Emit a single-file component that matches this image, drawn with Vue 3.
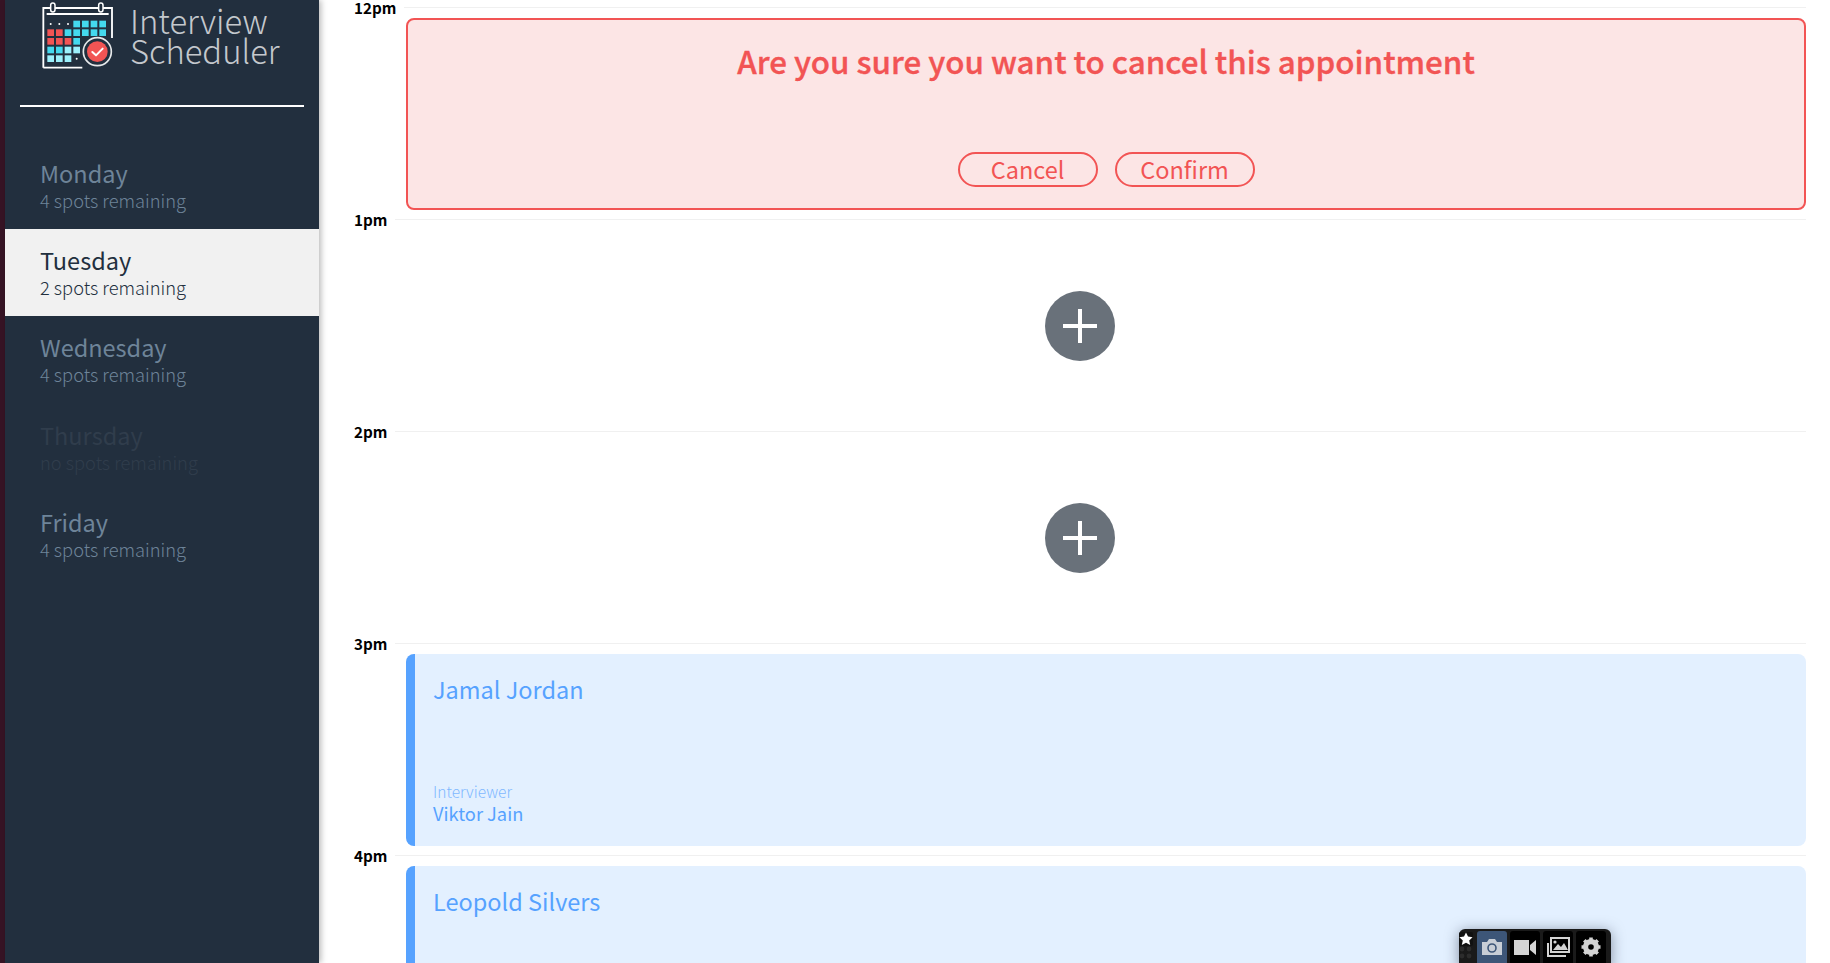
<script setup>
const days = [
  { name: 'Monday', spots: '4 spots remaining' },
  { name: 'Tuesday', spots: '2 spots remaining', selected: true },
  { name: 'Wednesday', spots: '4 spots remaining' },
  { name: 'Thursday', spots: 'no spots remaining', full: true },
  { name: 'Friday', spots: '4 spots remaining' }
]
const cyan = '#44d9ee', red = '#f25454', light = '#9cf0fb'
const cells = [
  [130, 62, cyan], [156, 62, cyan], [182, 62, cyan], [208, 62, cyan],
  [52, 88, red], [78, 88, red], [104, 88, cyan], [130, 88, cyan], [156, 88, cyan], [182, 88, cyan], [208, 88, cyan],
  [52, 114, red], [78, 114, red], [104, 114, red], [130, 114, cyan],
  [52, 140, cyan], [78, 140, cyan], [104, 140, light], [130, 140, light],
  [52, 166, light], [78, 166, light], [104, 166, light]
]
const dots = [[62, 72], [88, 72], [114, 72], [140, 176]]
const slots = [
  { time: '12pm', kind: 'confirm' },
  { time: '1pm', kind: 'empty' },
  { time: '2pm', kind: 'empty' },
  { time: '3pm', kind: 'show', student: 'Jamal Jordan', interviewer: 'Viktor Jain' },
  { time: '4pm', kind: 'show', student: 'Leopold Silvers', interviewer: 'Sylvia Palmer' }
]
</script>

<template>
  <div class="page">
    <div class="edge"></div>
    <aside class="sidebar">
      <div class="brand">
        <svg class="logo" viewBox="0 0 270 225" width="90" height="75" fill="none">
          <path d="M40 203V24H246V114" stroke="#fff" stroke-width="5.5" />
          <path d="M40 203H157" stroke="#fff" stroke-width="5.5" />
          <path d="M50 42H236" stroke="#fff" stroke-width="5.5" />
          <path d="M84 24H196" stroke="#fff" stroke-width="5.5" />
          <rect x="62" y="9" width="13" height="27" rx="6.5" fill="#222f3e" stroke="#fff" stroke-width="4.5" />
          <rect x="206" y="9" width="13" height="27" rx="6.5" fill="#222f3e" stroke="#fff" stroke-width="4.5" />
          <rect v-for="(c, i) in cells" :key="i" :x="c[0]" :y="c[1]" width="20" height="20" :fill="c[2]" />
          <circle v-for="(d, i) in dots" :key="'d' + i" :cx="d[0]" :cy="d[1]" r="3" fill="#fff" />
          <circle cx="202" cy="155" r="42" fill="#222f3e" stroke="#e6e8ea" stroke-width="5" />
          <circle cx="202" cy="155" r="31" fill="#f25454" />
          <path d="M187 156L198 166L218 146" stroke="#fff" stroke-width="6" stroke-linecap="round" stroke-linejoin="round" />
        </svg>
        <div class="brand-name">Interview<br />Scheduler</div>
      </div>
      <hr class="divider" />
      <ul class="days">
        <li v-for="d in days" :key="d.name" class="day" :class="{ selected: d.selected, full: d.full }">
          <div class="day-name">{{ d.name }}</div>
          <div class="day-spots">{{ d.spots }}</div>
        </li>
      </ul>
    </aside>

    <main class="schedule">
      <article v-for="s in slots" :key="s.time" class="slot">
        <header class="slot-head">
          <span class="slot-time">{{ s.time }}</span>
          <span class="slot-line"></span>
        </header>
        <section v-if="s.kind === 'confirm'" class="card confirm">
          <h1 class="confirm-title">Are you sure you want to cancel this appointment</h1>
          <div class="confirm-actions">
            <button class="pill">Cancel</button>
            <button class="pill">Confirm</button>
          </div>
        </section>
        <section v-else-if="s.kind === 'empty'" class="empty">
          <svg class="add" viewBox="0 0 70 70" width="70" height="70">
            <circle cx="35" cy="35" r="35" fill="#69717a" />
            <path d="M35 18V52M18 35H52" stroke="#fff" stroke-width="4" />
          </svg>
        </section>
        <section v-else class="card show">
          <div class="student">{{ s.student }}</div>
          <div class="interviewer">
            <div class="interviewer-label">Interviewer</div>
            <div class="interviewer-name">{{ s.interviewer }}</div>
          </div>
        </section>
      </article>
    </main>

    <div class="capture-bar">
      <div class="capture-pin">
        <svg viewBox="0 0 14 14" width="14" height="14">
          <rect width="14" height="14" rx="2" fill="#111" />
          <path d="M7 0.5L9 4.6L13.6 5.2L10.2 8.4L11.2 13L7 10.8L2.8 13L3.8 8.4L0.4 5.2L5 4.6Z" fill="#fff" />
        </svg>
        <svg viewBox="0 0 14 14" width="14" height="14">
          <g fill="#2c2c2c">
            <circle cx="3" cy="3" r="2.4" /><circle cx="10" cy="3" r="2.4" />
            <circle cx="3" cy="10" r="2.4" /><circle cx="10" cy="10" r="2.4" />
          </g>
        </svg>
      </div>
      <div class="capture-btn active">
        <svg viewBox="0 0 24 24" width="24" height="24">
          <path d="M2 7H7L9 4H15L17 7H22V20H2Z" fill="#c8ced6" />
          <circle cx="12" cy="13" r="4" fill="#c8ced6" stroke="#3d5678" stroke-width="1.6" />
        </svg>
      </div>
      <div class="capture-btn">
        <svg viewBox="0 0 24 24" width="24" height="24">
          <path d="M1 5H16V20H1ZM17 10L23 5V20L17 15Z" fill="#d4d4d4" />
        </svg>
      </div>
      <div class="capture-btn">
        <svg viewBox="0 0 24 24" width="24" height="24" fill="none">
          <path d="M2 8V21H20" stroke="#d4d4d4" stroke-width="2" />
          <rect x="5" y="3" width="18" height="14" fill="none" stroke="#d4d4d4" stroke-width="2" />
          <path d="M7 15L12 9L15 12L18 8L22 15Z" fill="#d4d4d4" />
          <circle cx="9" cy="7" r="1.6" fill="#d4d4d4" />
        </svg>
      </div>
      <div class="capture-btn">
        <svg viewBox="0 0 24 24" width="24" height="24">
          <path d="M12 6.5a5.5 5.5 0 100 11 5.5 5.5 0 000-11z" fill="none" stroke="#d4d4d4" stroke-width="5" />
          <path d="M12 2.5V21.5M2.5 12H21.5M5.3 5.3L18.7 18.7M18.7 5.3L5.3 18.7" stroke="#d4d4d4" stroke-width="3.6" />
          <circle cx="12" cy="12" r="2.8" fill="#000" />
        </svg>
      </div>
    </div>
  </div>
</template>

<style>
html, body { margin: 0; overflow: hidden; background: #fff; }
</style>

<style scoped>
.page {
  position: relative;
  display: flex;
  height: 963px;
  overflow: hidden;
  background: #fff;
  font-family: "Noto Sans CJK SC", "Source Sans Pro", "Lato", sans-serif;
}
.edge { width: 5px; flex: none; background: #371425; }
.sidebar {
  width: 314px;
  flex: none;
  background: #222f3e;
  box-shadow: 2px 0 6px rgba(0, 0, 0, 0.28);
  z-index: 1;
}
.brand { display: flex; padding-left: 25px; height: 105px; box-sizing: border-box; }
.logo { flex: none; }
.brand-name {
  margin: 5px 0 0 10px;
  font-size: 32.8px;
  line-height: 30px;
  font-weight: 300;
  color: #c4c8cd;
}
.divider { margin: 0 15px; height: 2px; border: 0; background: #fff; }
.days { list-style: none; margin: 35px 0 0; padding: 0; }
.day {
  height: 87.2px;
  padding: 16px 0 0 35px;
  box-sizing: border-box;
  color: #6e8499;
}
.day-name { font-size: 23.5px; line-height: 30px; }
.day-spots { font-size: 18.3px; line-height: 24px; font-weight: 300; }
.day.selected { background: #f1f1f1; color: #222f3e; }
.day.full { color: #303d4c; }
.schedule { flex: 1; padding: 0 24px 0 35px; min-width: 0; }
.slot { height: 212px; }
.slot-head { display: flex; align-items: center; height: 15px; }
.slot-time { font-size: 15.2px; line-height: 15px; font-weight: 700; color: #000; }
.slot-line { flex: 1; height: 1px; margin-left: 8px; background: #f0f0f0; }
.card { margin: 3px 0 0 52px; height: 192px; box-sizing: border-box; }
.confirm {
  border: 2px solid #f25454;
  border-radius: 8px;
  background: #fce5e5;
  color: #f25454;
  text-align: center;
  padding-top: 20px;
}
.confirm-title {
  margin: 0;
  font-size: 31.35px;
  line-height: 42px;
  font-weight: 500;
  -webkit-text-stroke: 0.35px #f25454;
}
.confirm-actions { display: flex; justify-content: center; gap: 17px; margin-top: 70px; }
.pill {
  width: 140px;
  height: 35px;
  padding: 0;
  border: 2px solid #f25454;
  border-radius: 18px;
  background: transparent;
  color: #f25454;
  font: inherit;
  font-size: 23.5px;
  line-height: 31px;
}
.empty { display: flex; justify-content: center; align-items: center; height: 192px; margin-top: 3px; }
.show {
  position: relative;
  display: flex;
  flex-direction: column;
  justify-content: space-between;
  padding: 18px 18px 21px;
  border-left: 9px solid #56a2ff;
  border-radius: 8px;
  background: #e3f0ff;
  color: #56a2ff;
}
.student { font-size: 23.5px; line-height: 34px; }
.interviewer-label { font-size: 15.5px; line-height: 19px; font-weight: 300; color: #7fb8ff; }
.interviewer-name { font-size: 18.3px; line-height: 24px; }
.capture-bar {
  position: absolute;
  left: 1459px;
  top: 929px;
  width: 152px;
  height: 40px;
  display: flex;
  gap: 3px;
  padding: 2px 5px 0 0;
  box-sizing: border-box;
  background: #1a1a1a;
  border-radius: 6px;
  box-shadow: 0 2px 14px rgba(40, 50, 70, 0.5);
  z-index: 2;
}
.capture-pin { width: 15px; display: flex; flex-direction: column; align-items: center; padding-top: 1px; }
.capture-btn {
  width: 31px;
  height: 36px;
  display: flex;
  justify-content: center;
  padding-top: 4px;
  box-sizing: border-box;
  background: #000;
  border-radius: 3px;
}
.capture-btn.active { background: #3d5678; }
</style>
